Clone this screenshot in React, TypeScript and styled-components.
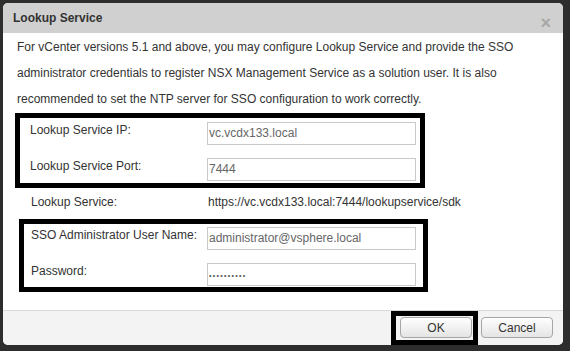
import styled, { createGlobalStyle } from 'styled-components';

const GlobalStyle = createGlobalStyle`
  body {
    margin: 0;
    background: #2d2d2d;
    font-family: "Liberation Sans", Arial, sans-serif;
  }
`;

const Page = styled.div`
  padding: 3px 7px 6px 3px;
`;

const Dialog = styled.div`
  width: 560px;
  height: 342px;
  background: #fff;
  border-radius: 5px;
  overflow: hidden;
  display: flex;
  flex-direction: column;
  color: #333;
  font-size: 12px;
`;

const Header = styled.div`
  height: 30px;
  flex: none;
  background: #d0d0d0;
  display: flex;
  justify-content: space-between;
  align-items: flex-start;
  padding: 0 12px 0 10px;
`;

const Title = styled.h1`
  margin: 7px 0 0;
  font-size: 12px;
  line-height: 16px;
  font-weight: bold;
  color: #333;
`;

const Close = styled.span`
  margin-top: 11px;
  font-size: 18px;
  line-height: 18px;
  font-weight: bold;
  color: #a8a8a8;
`;

const Body = styled.div`
  flex: 1;
  padding: 0 14px;
`;

const Intro = styled.p`
  margin: 1px 0;
  line-height: 26px;
  white-space: nowrap;
`;

const Frame = styled.div<{ $shift: number; $width: number; $pad: string }>`
  box-sizing: border-box;
  width: ${(p) => p.$width}px;
  margin-left: ${(p) => p.$shift}px;
  border: 5px solid #000;
  padding: ${(p) => p.$pad};
  display: grid;
  grid-template-columns: 1fr 209px;
  row-gap: 13px;
`;

const Label = styled.div`
  line-height: 16px;
  white-space: nowrap;
`;

const Field = styled.div`
  box-sizing: border-box;
  height: 23px;
  border: 1px solid #c9c9c9;
  padding: 0 1px;
  line-height: 21px;
  color: #666;
  white-space: nowrap;
  overflow: hidden;
`;

const Dots = styled.span`
  font-size: 7px;
  letter-spacing: 1.3px;
  color: #555;
`;

const InfoRow = styled.div`
  display: grid;
  grid-template-columns: 177px 1fr;
  padding: 6px 0 9px 14px;
  line-height: 16px;
`;

const Footer = styled.div`
  box-sizing: border-box;
  height: 35px;
  flex: none;
  border-top: 1px solid #d9d9d9;
  background: #f3f3f3;
  display: flex;
  justify-content: flex-end;
  align-items: flex-start;
  padding-right: 10px;
`;

const Highlight = styled.div`
  border: 5px solid #000;
  padding: 1px 1px 2px 4px;
`;

const Button = styled.button<{ $offset?: number }>`
  width: 72px;
  height: 21px;
  margin-top: ${(p) => p.$offset ?? 0}px;
  margin-left: ${(p) => (p.$offset ? 3 : 0)}px;
  border: 1px solid #a6a6a6;
  border-radius: 4px;
  background: linear-gradient(#ffffff, #e4e4e4);
  font-family: "Liberation Sans", Arial, sans-serif;
  font-size: 12px;
  color: #333;
  padding: 0;
`;

export default function App() {
  return (
    <Page>
      <GlobalStyle />
      <Dialog>
        <Header>
          <Title>Lookup Service</Title>
          <Close>×</Close>
        </Header>
        <Body>
          <Intro>
            For vCenter versions 5.1 and above, you may configure Lookup Service and provide the SSO
            <br />
            administrator credentials to register NSX Management Service as a solution user. It is also
            <br />
            recommended to set the NTP server for SSO configuration to work correctly.
          </Intro>
          <Frame $shift={-2} $width={410} $pad="4px 4px 2px 10px">
            <Label>Lookup Service IP:</Label>
            <Field>vc.vcdx133.local</Field>
            <Label>Lookup Service Port:</Label>
            <Field>7444</Field>
          </Frame>
          <InfoRow>
            <span>Lookup Service:</span>
            <span>https://vc.vcdx133.local:7444/lookupservice/sdk</span>
          </InfoRow>
          <Frame $shift={2} $width={409} $pad="3px 7px 1px 7px">
            <Label>SSO Administrator User Name:</Label>
            <Field>administrator@vsphere.local</Field>
            <Label>Password:</Label>
            <Field>
              <Dots>••••••••••</Dots>
            </Field>
          </Frame>
        </Body>
        <Footer>
          <Highlight>
            <Button>OK</Button>
          </Highlight>
          <Button $offset={6}>Cancel</Button>
        </Footer>
      </Dialog>
    </Page>
  );
}
